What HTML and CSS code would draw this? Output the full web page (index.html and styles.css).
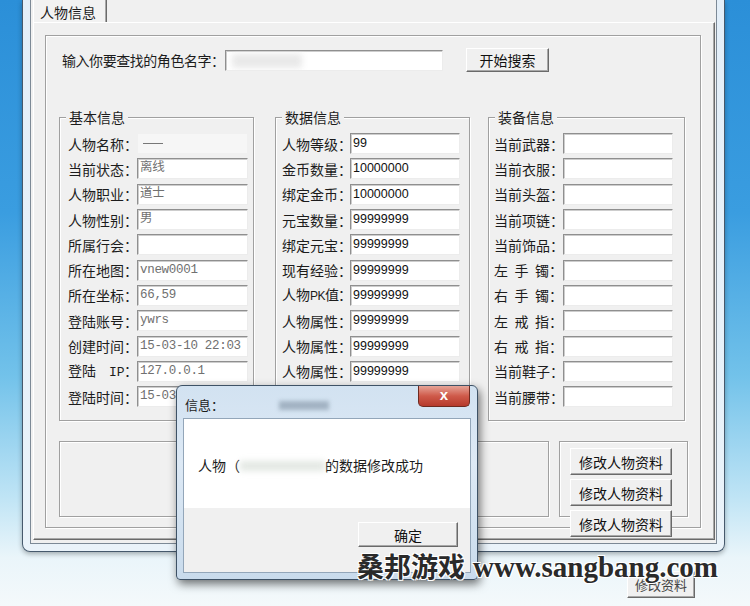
FILE: index.html
```html
<!DOCTYPE html>
<html lang="zh-CN">
<head>
    <meta charset="UTF-8" />
    <meta name="viewport" content="width=device-width, initial-scale=1.0"/>
    <title>人物信息</title>
    <link rel="stylesheet" href="styles.css">
</head>
<body>
<div class="desktop">
    <div class="window">
        <div class="client">
            <div class="tabs">
                <div class="tab">人物信息</div>
            </div>
            <div class="tab-panel">
                <div class="main-group">
                    <div class="search-row">
                        <span class="search-label">输入你要查找的角色名字：</span>
                        <div class="field search-field"><span class="smudge"></span></div>
                        <button class="btn search-btn">开始搜索</button>
                    </div>

                    <div class="groups">
                        <fieldset class="group basic">
                            <legend>基本信息</legend>
                            <div class="rows">
                                <div class="lbl"><span class="name">人物名称</span>：</div>
                                <div class="field masked"><span class="dash"></span></div>
                                <div class="lbl"><span class="name">当前状态</span>：</div>
                                <div class="field gray">离线</div>
                                <div class="lbl"><span class="name">人物职业</span>：</div>
                                <div class="field gray">道士</div>
                                <div class="lbl"><span class="name">人物性别</span>：</div>
                                <div class="field gray">男</div>
                                <div class="lbl"><span class="name">所属行会</span>：</div>
                                <div class="field gray"></div>
                                <div class="lbl"><span class="name">所在地图</span>：</div>
                                <div class="field gray">vnew0001</div>
                                <div class="lbl"><span class="name">所在坐标</span>：</div>
                                <div class="field gray">66,59</div>
                                <div class="lbl"><span class="name">登陆账号</span>：</div>
                                <div class="field gray">ywrs</div>
                                <div class="lbl"><span class="name">创建时间</span>：</div>
                                <div class="field gray">15-03-10 22:03</div>
                                <div class="lbl"><span class="name plain">登陆<span class="ip">IP</span></span>：</div>
                                <div class="field gray">127.0.0.1</div>
                                <div class="lbl"><span class="name">登陆时间</span>：</div>
                                <div class="field gray">15-03-10 22:05</div>
                            </div>
                        </fieldset>

                        <fieldset class="group data">
                            <legend>数据信息</legend>
                            <div class="rows">
                                <div class="lbl"><span class="name">人物等级</span>：</div>
                                <div class="field num">99</div>
                                <div class="lbl"><span class="name">金币数量</span>：</div>
                                <div class="field num">10000000</div>
                                <div class="lbl"><span class="name">绑定金币</span>：</div>
                                <div class="field num">10000000</div>
                                <div class="lbl"><span class="name">元宝数量</span>：</div>
                                <div class="field num">99999999</div>
                                <div class="lbl"><span class="name">绑定元宝</span>：</div>
                                <div class="field num">99999999</div>
                                <div class="lbl"><span class="name">现有经验</span>：</div>
                                <div class="field num">99999999</div>
                                <div class="lbl"><span class="name plain">人物<span class="latin">PK</span>值</span>：</div>
                                <div class="field num">99999999</div>
                                <div class="lbl"><span class="name">人物属性</span>：</div>
                                <div class="field num">99999999</div>
                                <div class="lbl"><span class="name">人物属性</span>：</div>
                                <div class="field num">99999999</div>
                                <div class="lbl"><span class="name">人物属性</span>：</div>
                                <div class="field num">99999999</div>
                            </div>
                        </fieldset>

                        <fieldset class="group equip">
                            <legend>装备信息</legend>
                            <div class="rows">
                                <div class="lbl"><span class="name">当前武器</span>：</div>
                                <div class="field"></div>
                                <div class="lbl"><span class="name">当前衣服</span>：</div>
                                <div class="field"></div>
                                <div class="lbl"><span class="name">当前头盔</span>：</div>
                                <div class="field"></div>
                                <div class="lbl"><span class="name">当前项链</span>：</div>
                                <div class="field"></div>
                                <div class="lbl"><span class="name">当前饰品</span>：</div>
                                <div class="field"></div>
                                <div class="lbl"><span class="name">左 手 镯</span>：</div>
                                <div class="field"></div>
                                <div class="lbl"><span class="name">右 手 镯</span>：</div>
                                <div class="field"></div>
                                <div class="lbl"><span class="name">左 戒 指</span>：</div>
                                <div class="field"></div>
                                <div class="lbl"><span class="name">右 戒 指</span>：</div>
                                <div class="field"></div>
                                <div class="lbl"><span class="name">当前鞋子</span>：</div>
                                <div class="field"></div>
                                <div class="lbl"><span class="name">当前腰带</span>：</div>
                                <div class="field"></div>
                            </div>
                        </fieldset>
                    </div>

                    <div class="lower">
                        <div class="group lower-left"></div>
                        <div class="group lower-right">
                            <button class="btn side-btn">修改人物资料</button>
                            <button class="btn side-btn">修改人物资料</button>
                            <button class="btn side-btn">修改人物资料</button>
                        </div>
                    </div>
                </div>
            </div>
        </div>
    </div>

    <button class="btn stray-btn">修改资料</button>

    <!-- message box on top of the editor -->
    <div class="dialog">
        <div class="dlg-title">
            信息：<span class="title-smudge"></span>
            <div class="dlg-close">x</div>
        </div>
        <div class="dlg-body">
            <div class="dlg-msg">人物（<span class="msg-smudge"></span>的数据修改成功</div>
            <div class="dlg-foot">
                <button class="btn ok-btn">确定</button>
            </div>
        </div>
    </div>

    <div class="watermark">桑邦游戏 <span class="url">www.sangbang.com</span></div>
</div>
</body>
</html>
```

FILE: styles.css
```css
* {
    margin: 0;
    padding: 0;
    box-sizing: border-box;
}

body {
    width: 750px;
    height: 606px;
    overflow: hidden;
    font-family: "Noto Sans CJK SC", "Liberation Sans", sans-serif;
    font-size: 14px;
    color: #1c1c1c;
}

.desktop {
    position: relative;
    width: 750px;
    height: 606px;
    overflow: hidden;
    background: linear-gradient(to bottom, #2b8fd8 0%, #3a9de0 35%, #72c2ea 62%, #bfe4f5 82%, #eaf5fa 92%, #f4f9fb 100%);
}

/* window frame */
.window {
    width: 703px;
    height: 552px;
    margin-left: 22px;
    padding: 0 7px 7px 7px;
    background: linear-gradient(to bottom, #e3eef8, #eaf3fa);
    border: 1px solid #46596c;
    border-top: 0;
    border-radius: 0 0 8px 8px;
    box-shadow: 0 2px 5px rgba(0, 0, 0, 0.3);
}

.client {
    display: flex;
    flex-direction: column;
    height: 100%;
    padding: 0 1px 3px 2px;
    background: #f0f0f0;
    border: 1px solid #7c8996;
    border-top: 0;
}

.tabs {
    display: flex;
    height: 22px;
}

.tab {
    width: 74px;
    height: 22px;
    padding-left: 6px;
    line-height: 24px;
    background: #f2f2f2;
    border-left: 1px solid #fff;
    border-right: 1px solid #6a6a6a;
    box-shadow: inset -1px 0 0 #a8a8a8;
}

.tab-panel {
    flex: 1;
    padding: 12px 13px 11px 11px;
    border: 1px solid;
    border-color: #fff #6a6a6a #6a6a6a #fff;
    box-shadow: inset -1px -1px 0 #a8a8a8;
}

.main-group {
    height: 100%;
    border: 1px solid #a0a0a0;
    box-shadow: inset 1px 1px 0 #fff, 1px 1px 0 #fff;
}

/* search line */
.search-row {
    display: flex;
    align-items: center;
    height: 24px;
    margin-top: 12px;
    padding-left: 16px;
}

.search-label {
    width: 163px;
    letter-spacing: -0.45px;
    white-space: nowrap;
}

.search-field {
    width: 218px;
    height: 21px;
}

.smudge {
    display: block;
    width: 70px;
    height: 14px;
    margin: 3px 0 0 4px;
    background: #e9e9e9;
    filter: blur(3px);
}

.btn {
    font-family: "Noto Sans CJK SC", "Liberation Sans", sans-serif;
    font-size: 14px;
    color: #111;
    background: #f0f0f0;
    border: 1px solid;
    border-color: #fff #6a6a6a #6a6a6a #fff;
    box-shadow: inset -1px -1px 0 #a8a8a8;
}

.search-btn {
    width: 83px;
    height: 24px;
    margin-left: 23px;
}

/* three info groups */
.groups {
    display: flex;
    margin-top: 35px;
    padding-left: 13px;
}

.group {
    min-width: 0;
    border: 1px solid #a0a0a0;
    box-shadow: inset 1px 1px 0 #fff, 1px 1px 0 #fff;
}

fieldset.group {
    height: 314px;
    padding: 4px 0 0 0;
}

.group legend {
    margin-left: 6px;
    padding: 0 3px;
    line-height: 20px;
    background: #f0f0f0;
}

.basic {
    width: 195px;
}

.data {
    width: 195px;
    margin-left: 21px;
}

.equip {
    width: 197px;
    margin-left: 18px;
}

.rows {
    display: grid;
    grid-template-columns: 69px 111px;
    grid-auto-rows: 25.3px;
    align-items: center;
    padding-left: 8px;
}

.data .rows {
    padding-left: 6px;
    grid-template-columns: 68px 110px;
}

.equip .rows {
    padding-left: 5px;
    grid-template-columns: 69px 110px;
}

.lbl {
    display: flex;
    white-space: nowrap;
    line-height: 20px;
}

.name {
    width: 56px;
    text-align: justify;
    text-align-last: justify;
}

.name.plain {
    text-align-last: left;
}

.latin {
    font-family: "Liberation Sans", sans-serif;
    font-size: 12px;
    letter-spacing: -0.5px;
}

.ip {
    margin-left: 13px;
    font-family: "Liberation Mono", monospace;
    font-size: 13px;
}

.field {
    height: 21px;
    padding-left: 2px;
    overflow: hidden;
    white-space: nowrap;
    font-size: 12.5px;
    line-height: 19px;
    background: #fff;
    border: 1px solid;
    border-color: #8f8f8f #ececec #ececec #8f8f8f;
    box-shadow: inset 1px 1px 0 #cdcdcd;
}

.gray {
    color: #707070;
    font-family: "Liberation Mono", "Noto Sans CJK SC", monospace;
    letter-spacing: -0.3px;
}

.num {
    color: #111;
    font-family: "Liberation Sans", sans-serif;
}

.masked {
    background: #f6f6f6;
    border-color: #f0f0f0;
    box-shadow: none;
}

.dash {
    display: block;
    width: 20px;
    margin: 9px 0 0 3px;
    border-top: 1px solid #777;
}

/* lower boxes */
.lower {
    display: flex;
    margin-top: 20px;
    padding-left: 13px;
}

.lower-left {
    width: 490px;
    height: 76px;
}

.lower-right {
    width: 129px;
    height: 76px;
    margin-left: 10px;
    padding: 6px 0 0 10px;
}

.side-btn {
    display: block;
    width: 102px;
    height: 27px;
    margin-bottom: 4px;
}

.stray-btn {
    position: absolute;
    left: 627px;
    top: 571px;
    width: 68px;
    height: 27px;
    font-size: 13px;
    color: #444;
}

/* message box */
.dialog {
    position: absolute;
    left: 176px;
    top: 385px;
    width: 302px;
    height: 195px;
    padding: 0 6px 6px 6px;
    background: linear-gradient(to bottom, #d2e2f1, #dde9f5 40%, #c9dbec);
    border: 1px solid #3e5266;
    border-radius: 6px 6px 4px 4px;
    box-shadow: 2px 4px 10px rgba(0, 0, 0, 0.55);
}

.dlg-title {
    position: relative;
    height: 32px;
    padding-left: 2px;
    font-size: 13px;
    line-height: 38px;
}

.title-smudge {
    display: inline-block;
    width: 50px;
    height: 9px;
    margin-left: 55px;
    background: rgba(70, 90, 110, 0.35);
    filter: blur(2px);
}

.dlg-close {
    position: absolute;
    right: 1px;
    top: 0;
    width: 52px;
    height: 21px;
    text-align: center;
    font-family: "Liberation Sans", sans-serif;
    font-weight: bold;
    font-size: 15px;
    line-height: 18px;
    color: #fff;
    background: linear-gradient(to bottom, #e6a497, #cf5a4a 50%, #b63a2c);
    border: 1px solid #6e2a20;
    border-top: 0;
    border-radius: 0 0 5px 5px;
}

.dlg-body {
    height: 155px;
    background: #f0f0f0;
    border: 1px solid #93a6b9;
}

.dlg-msg {
    height: 89px;
    padding: 36px 0 0 14px;
    line-height: 20px;
    background: #fff;
    white-space: nowrap;
}

.msg-smudge {
    display: inline-block;
    width: 85px;
    height: 10px;
    background: rgba(200, 210, 200, 0.5);
    filter: blur(3px);
}

.dlg-foot {
    padding: 14px 0 0 174px;
}

.ok-btn {
    width: 100px;
    height: 25px;
}

/* watermark */
.watermark {
    position: absolute;
    left: 357px;
    top: 549px;
    display: flex;
    align-items: baseline;
    gap: 8px;
    line-height: 34px;
    color: #2a2a2a;
    font-size: 27px;
    font-weight: 700;
    white-space: nowrap;
    text-shadow: 1px 1px 0 #fff, -1px -1px 0 #fff, 1px -1px 0 #fff, -1px 1px 0 #fff;
}

.url {
    font-family: "Liberation Serif", serif;
    font-size: 29px;
}
```
